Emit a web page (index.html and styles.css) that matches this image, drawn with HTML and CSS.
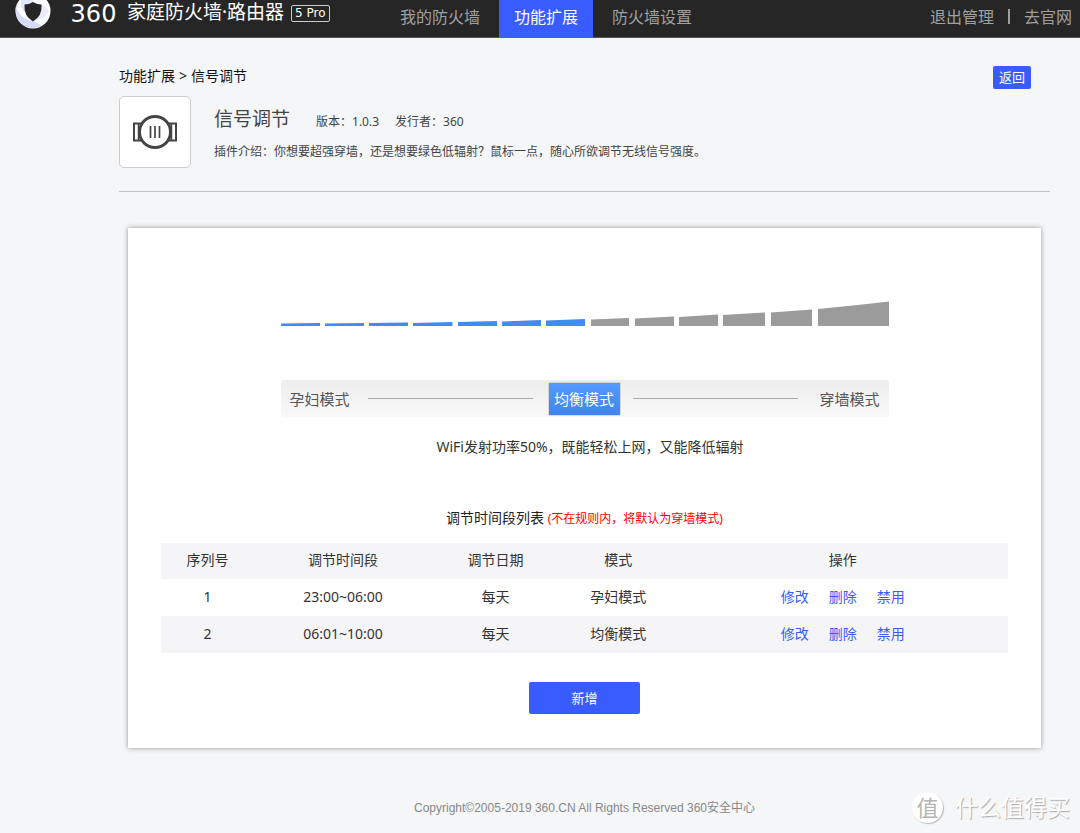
FILE: index.html
```html
<!DOCTYPE html>
<html lang="zh-CN">
<head>
<meta charset="utf-8">
<meta name="viewport" content="width=device-width, initial-scale=1">
<title>信号调节</title>
<link rel="stylesheet" href="styles.css">
</head>
<body>
<header class="topbar">
  <div class="brand">
    <svg class="brand-mark" viewBox="0 0 36 36" aria-hidden="true">
      <circle cx="18" cy="18" r="17.5" fill="#fff"/>
      <path d="M1 13 Q3 25 19 28.500 L27 32.500 Q17 38 7 31 Q-1 24 1 13Z" fill="#d5daf8"/>
      <path d="M7 5 Q3 12 10 20 L10 13 L18 9 L17 1 Q11 1 7 5Z" fill="#e3e7fb"/>
      <path d="M26 11 L26 18 Q24 25 18 28 Q28 27 34 19 Q32 13 26 11Z" fill="#e9ecfd"/>
      <path d="M18 9 Q22 11.500 26.500 11.500 Q27.500 23 18 28.500 Q8.500 23 9.500 11.500 Q14 11.500 18 9Z" fill="#262626"/>
    </svg>
    <span class="brand-number">360</span>
    <span class="brand-name">家庭防火墙·路由器</span>
    <span class="brand-model">5 Pro</span>
  </div>
  <nav class="nav">
    <a class="nav-link" href="#">我的防火墙</a>
    <a class="nav-link nav-link-active" href="#">功能扩展</a>
    <a class="nav-link" href="#">防火墙设置</a>
  </nav>
  <div class="account">
    <a href="#">退出管理</a>
    <span class="account-divider"></span>
    <a href="#">去官网</a>
  </div>
</header>

<main class="page">
  <div class="crumb-row">
    <div class="crumbs"><a href="#">功能扩展</a><span>&gt;</span><span>信号调节</span></div>
    <button class="back" type="button">返回</button>
  </div>

  <section class="plugin">
    <div class="plugin-icon">
      <svg viewBox="0 0 44 34" aria-hidden="true" fill="none" stroke="#444">
        <path d="M9 8.500H1V25.500H9M35 8.500H43V25.500H35" stroke-width="2"/>
        <path d="M5.500 9V25M38.500 9V25" stroke-width="1.500"/>
        <circle cx="22" cy="17" r="15.500" fill="#fff" stroke-width="3"/>
        <path d="M17.500 11V23M22 11V23M26.500 11V23" stroke-width="1.700"/>
      </svg>
    </div>
    <div class="plugin-info">
      <div class="plugin-head">
        <h1 class="plugin-title">信号调节</h1>
        <span>版本：1.0.3</span>
        <span>发行者：360</span>
      </div>
      <p class="plugin-desc">插件介绍：你想要超强穿墙，还是想要绿色低辐射？鼠标一点，随心所欲调节无线信号强度。</p>
    </div>
  </section>

  <section class="card">
    <div class="signal">
      <svg class="signal-bars" viewBox="0 0 608 26" aria-hidden="true">
        <g fill="#438af1">
          <path d="M0 22.500L39 22V25H0Z"/>
          <path d="M44 22.500L83 22V25H44Z"/>
          <path d="M88 22L127 21.500V25H88Z"/>
          <path d="M132 22L171.500 21V25H132Z"/>
          <path d="M177 21L216 20V25H177Z"/>
          <path d="M221 20.500L260 19V25H221Z"/>
          <path d="M265 19.500L304 18V25H265Z"/>
        </g>
        <g fill="#9b9b9b">
          <path d="M310 18.500L348 17V25H310Z"/>
          <path d="M354 17.500L393 15.500V25H354Z"/>
          <path d="M398 16L437 13.500V25H398Z"/>
          <path d="M442 14L484 11.500V25H442Z"/>
          <path d="M490 11.500L531 8.500V25H490Z"/>
          <path d="M537 8Q574 4.500 608 0.500V25H537Z"/>
        </g>
      </svg>
      <div class="modes">
        <button class="mode" type="button">孕妇模式</button>
        <span class="mode-line"></span>
        <button class="mode mode-active" type="button">均衡模式</button>
        <span class="mode-line"></span>
        <button class="mode" type="button">穿墙模式</button>
      </div>
    </div>
    <p class="mode-note">WiFi发射功率50%，既能轻松上网，又能降低辐射</p>

    <h2 class="list-title">调节时间段列表 <span class="list-hint">(不在规则内，将默认为穿墙模式)</span></h2>
    <table class="rules">
      <colgroup><col class="col-index"><col class="col-time"><col class="col-date"><col class="col-mode"><col></colgroup>
      <thead>
        <tr><th>序列号</th><th>调节时间段</th><th>调节日期</th><th>模式</th><th>操作</th></tr>
      </thead>
      <tbody>
        <tr><td>1</td><td>23:00~06:00</td><td>每天</td><td>孕妇模式</td><td><div class="actions"><a href="#">修改</a><a href="#">删除</a><a href="#">禁用</a></div></td></tr>
        <tr><td>2</td><td>06:01~10:00</td><td>每天</td><td>均衡模式</td><td><div class="actions"><a href="#">修改</a><a href="#">删除</a><a href="#">禁用</a></div></td></tr>
      </tbody>
    </table>
    <button class="add" type="button">新增</button>
  </section>
</main>

<footer class="footer">Copyright©2005-2019 360.CN All Rights Reserved 360安全中心</footer>
<div class="watermark"><span class="watermark-badge">值</span><span>什么值得买</span></div>
</body>
</html>
```

FILE: styles.css
```css
* { box-sizing: border-box; }

body {
  position: relative;
  margin: 0;
  min-height: 100vh;
  background: #f4f6f8;
  color: #333;
  font: 14px/20px "Noto Sans", "Noto Sans CJK SC", sans-serif;
}

a { color: inherit; text-decoration: none; }
h1, h2, p { margin: 0; font-weight: 400; }
button { border: 0; padding: 0; font: inherit; cursor: pointer; }

.topbar {
  display: flex;
  height: 38px;
  padding: 0 8px 0 15px;
  border-bottom: 1px solid #555;
  background: #262626;
  color: #a0a0a0;
  font-size: 16px;
}

.brand {
  display: flex;
  flex: 0 0 370px;
  align-items: center;
  height: 24px;
  color: #fff;
}
.brand-mark { flex: none; width: 36px; height: 36px; margin: 0 9px 2px 0; }
.brand-number {
  width: 67px;
  padding-top: 4px;
  font: 24px/24px "DejaVu Sans", sans-serif;
  text-align: center;
}
.brand-name { font-size: 19px; line-height: 24px; }
.brand-model {
  margin: 2px 0 0 7px;
  padding: 0 3px;
  border: 1px solid #ccc;
  border-radius: 2px;
  font: 12px/15px "DejaVu Sans", sans-serif;
}

.nav { display: flex; }
.nav-link { height: 38px; padding: 0 15px; line-height: 34px; white-space: nowrap; }
.nav-link:first-child { padding-right: 19px; }
.nav-link:last-child { padding-left: 19px; }
.nav-link-active { background: #385cff; color: #fff; }

.account { display: flex; gap: 14px; margin-left: auto; line-height: 34px; white-space: nowrap; }
.account-divider { width: 2px; height: 15px; margin-top: 9px; background: #a0a0a0; }

.page { padding: 28px 30px 0 119px; }

.crumb-row { display: flex; justify-content: space-between; height: 30px; padding-right: 19px; }
.crumbs { display: flex; gap: 4px; color: #111; }
.back { width: 38px; height: 23px; border-radius: 2px; background: #385cff; color: #fff; font-size: 13px; line-height: 23px; }

.plugin { display: flex; gap: 23px; padding-bottom: 23px; border-bottom: 1px solid #c4c4c8; }
.plugin-icon {
  display: flex;
  flex: none;
  align-items: center;
  justify-content: center;
  width: 72px;
  height: 72px;
  border: 1px solid #ccc;
  border-radius: 5px;
  background: #fff;
}
.plugin-icon svg { width: 44px; height: 34px; }
.plugin-info { padding-top: 8px; font-size: 12px; color: #444; }
.plugin-head { display: flex; align-items: baseline; gap: 16px; line-height: 30px; }
.plugin-title { margin-right: 10px; font-size: 19px; }
.plugin-desc { margin-top: 5px; }

.card {
  display: flex;
  flex-direction: column;
  align-items: center;
  margin: 36px 9px 0;
  padding: 73px 33px 34px;
  background: #fff;
  box-shadow: 0 0 5px rgba(0, 0, 0, 0.4);
}

.signal { width: 608px; max-width: 100%; }
.signal-bars { display: block; width: 100%; }
.modes {
  display: flex;
  align-items: center;
  height: 37px;
  margin-top: 53px;
  padding: 0 9px;
  border-radius: 3px;
  background: linear-gradient(#ededed, #f9f9f9);
}
.mode { background: none; color: #555; font-size: 15px; }
.mode:first-child { margin-right: 18px; }
.mode:last-child { margin-left: auto; }
.mode-active {
  width: 71px;
  height: 32px;
  margin: 0 13px 0 16px;
  background: linear-gradient(#559aff, #4085ee);
  box-shadow: 0 0 1px #357;
  color: #fff;
}
.mode-line { flex: 0 1 165px; height: 1px; background: #aaa; }

.mode-note { margin-top: 20px; padding-left: 11px; }
.list-title { margin-top: 51px; font-size: 14px; color: #222; }
.list-hint { font-size: 12px; color: #f00; }

.rules { width: 100%; margin-top: 14px; border-collapse: collapse; table-layout: fixed; text-align: center; }
.rules th, .rules td { height: 37px; padding: 0 0 2px; font-weight: 400; }
.rules th { height: 36px; }
.rules th, .rules tr:nth-child(even) td { background: #f5f5f8; }
.col-index { width: 11%; }
.col-time { width: 21%; }
.col-date { width: 15%; }
.col-mode { width: 14%; }
.actions { display: flex; justify-content: center; gap: 20px; color: #385cff; }

.add { width: 111px; height: 32px; margin-top: 29px; border-radius: 2px; background: #385cff; color: #fff; font-size: 13px; }

.footer {
  padding: 50px 0 16px 89px;
  color: #888;
  font: 12px/20px "Liberation Sans", "Noto Sans CJK SC", sans-serif;
  text-align: center;
}

.watermark {
  position: absolute;
  right: 10px;
  bottom: 11px;
  display: flex;
  align-items: center;
  gap: 12px;
  color: #fff;
  font-size: 23px;
  line-height: 32px;
  text-shadow: 1px 1px 1px #aaa;
}
.watermark-badge {
  width: 31px;
  height: 31px;
  border-radius: 50%;
  background: #fff;
  box-shadow: 1px 1px 1px #bbb;
  color: #b5b5b5;
  font-size: 22px;
  line-height: 30px;
  text-align: center;
  text-shadow: none;
}
```
